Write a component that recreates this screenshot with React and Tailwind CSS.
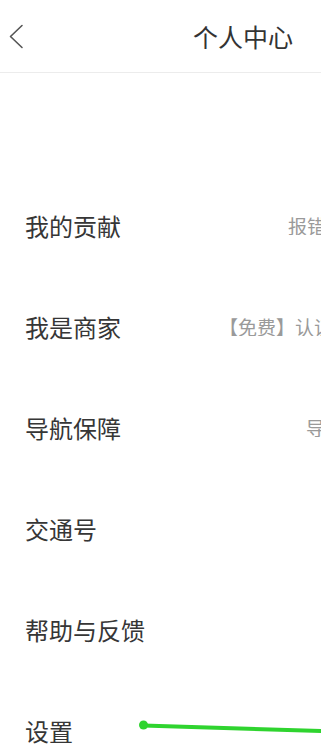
import { memo } from 'react';

const rows = [
  { label: '我的贡献', value: '报错', width: 'w-[33px]' },
  { label: '我是商家', value: '【免费】认证', width: 'w-[102px]' },
  { label: '导航保障', value: '导航', width: 'w-[15px]' },
  { label: '交通号', value: '', width: 'w-0' },
  { label: '帮助与反馈', value: '', width: 'w-0' },
  { label: '设置', value: '', width: 'w-0' },
];

const MenuRow = memo(function MenuRow({ row }) {
  return (
    <div className="flex h-[101px] items-center pl-[25px]">
      <span className="flex-1 text-[24px] leading-none text-[#363636]">{row.label}</span>
      <span className={`${row.width} shrink-0 overflow-hidden whitespace-nowrap text-[19px] leading-none text-[#9a9a9a]`}>
        {row.value}
      </span>
    </div>
  );
});

export default function App() {
  return (
    <div
      className="relative h-[755px] w-[321px] overflow-hidden bg-white"
      style={{ fontFamily: '"Noto Sans CJK SC", "Noto Sans", sans-serif' }}
    >
      <header className="flex h-[73px] items-center border-b border-[#ececec]">
        <button type="button" className="flex h-full w-[40px] items-center pl-[8px]">
          <svg width="16" height="25" viewBox="0 0 16 25" fill="none">
            <path d="M14 1.5 L2.5 12.5 L14 23.5" stroke="#555" strokeWidth="1.6" strokeLinecap="round" strokeLinejoin="round" />
          </svg>
        </button>
        <h1 className="ml-[153px] whitespace-nowrap text-[25px] font-normal leading-none text-[#333]">个人中心</h1>
      </header>

      <div className="pt-[102px]">
        {rows.map((row) => (
          <MenuRow key={row.label} row={row} />
        ))}
      </div>

      <svg className="pointer-events-none absolute left-0 top-0" width="321" height="755" viewBox="0 0 321 755">
        <path d="M143 725.5 L321 731" stroke="#2fd42f" strokeWidth="4" strokeLinecap="round" />
        <circle cx="143.5" cy="725" r="4.5" fill="#2fd42f" />
      </svg>
    </div>
  );
}
